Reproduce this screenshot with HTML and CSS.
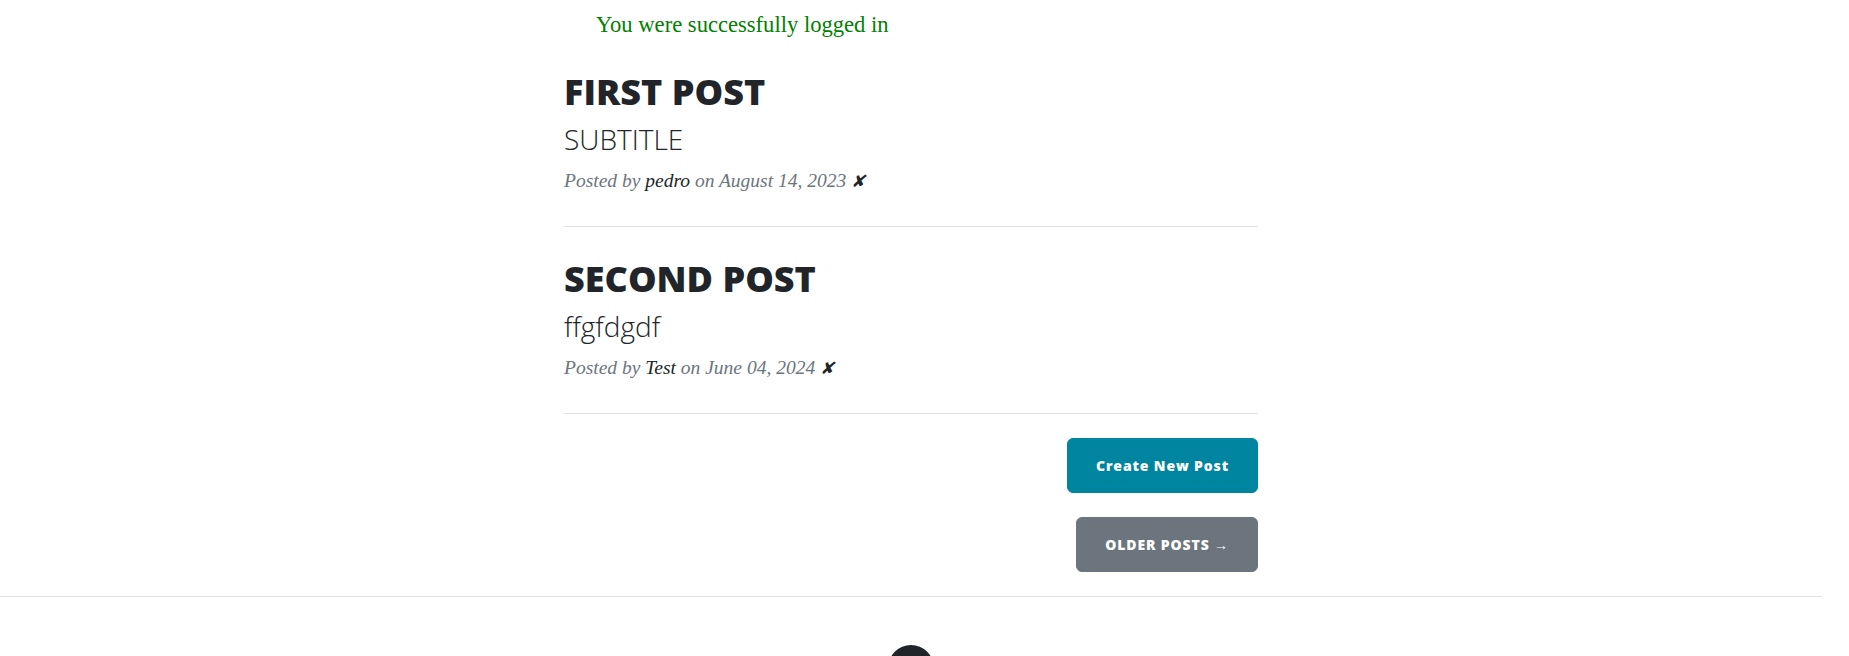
FILE: index.html
```html
<!DOCTYPE html>
<html lang="en">
<head>
<meta charset="utf-8">
<title>Clean Blog</title>
<link rel="stylesheet" href="styles.css">
</head>
<body>
<div class="page">
  <main class="container">
    <ul class="flashes">
      <li>You were successfully logged in</li>
    </ul>

    <div class="post-preview">
      <a class="post-link" href="#">
        <h2 class="post-title">First Post</h2>
        <h3 class="post-subtitle">SUBTITLE</h3>
      </a>
      <p class="post-meta">Posted by <a class="meta-link" href="#">pedro</a> on August 14, 2023 <a class="meta-link delete" href="#">✘</a></p>
    </div>
    <hr class="divider">

    <div class="post-preview">
      <a class="post-link" href="#">
        <h2 class="post-title">Second Post</h2>
        <h3 class="post-subtitle">ffgfdgdf</h3>
      </a>
      <p class="post-meta">Posted by <a class="meta-link" href="#">Test</a> on June 04, 2024 <a class="meta-link delete" href="#">✘</a></p>
    </div>
    <hr class="divider">

    <div class="actions">
      <a class="btn btn-primary" href="#">Create New Post</a>
    </div>
    <div class="actions">
      <a class="btn btn-secondary btn-upper" href="#">Older Posts →</a>
    </div>
  </main>

  <footer class="footer">
    <ul class="social">
      <li><span class="social-circle"></span></li>
    </ul>
  </footer>
</div>
</body>
</html>
```

FILE: styles.css
```css
html, body {
  margin: 0;
  padding: 0;
  background: #ffffff;
}

body {
  font-family: "Liberation Serif", "DejaVu Serif", serif;
  color: #212529;
  font-size: 20px;
}

.page {
  padding-right: 27px;
}

.container {
  width: 694px;
  margin: 0 auto;
}

.flashes {
  list-style: none;
  margin: 0;
  padding: 10px 0 0 32px;
}

.flashes li {
  color: #008000;
  font-size: 22.6px;
  line-height: 30px;
}

.post-link {
  color: #212529;
  text-decoration: none;
  display: block;
}

.post-title {
  font-family: "Open Sans", "Liberation Sans", sans-serif;
  font-weight: 800;
  font-size: 36px;
  line-height: 1.2;
  text-transform: uppercase;
  margin: 30px 0 10px;
  color: #212529;
}

.post-subtitle {
  font-family: "Open Sans", "Liberation Sans", sans-serif;
  font-weight: 300;
  font-size: 28px;
  line-height: 1.2;
  margin: 0 0 10px;
  color: #212529;
}

.post-meta {
  font-style: italic;
  font-size: 19.5px;
  line-height: 27px;
  height: 27px;
  color: #6c757d;
  margin: 0 0 32px;
}

.meta-link {
  color: #212529;
  text-decoration: none;
}

.delete {
  font-size: 17px;
  line-height: 1;
}

.divider {
  border: 0;
  border-top: 1px solid #dee2e6;
  margin: 0;
  height: 0;
}

.actions {
  display: flex;
  justify-content: flex-end;
  margin-top: 24px;
}

.btn {
  display: inline-block;
  font-family: "Open Sans", "Liberation Sans", sans-serif;
  font-weight: 800;
  font-size: 14px;
  line-height: 21px;
  letter-spacing: 0.0625em;
  color: #ffffff;
  text-decoration: none;
  padding: 16px 28px;
  border: 1px solid transparent;
  border-radius: 6px;
}

.btn-primary {
  background: #0085a1;
  border-color: #0085a1;
}

.btn-secondary {
  background: #6c757d;
  border-color: #6c757d;
}

.btn-upper {
  text-transform: uppercase;
}

.footer {
  margin-top: 24px;
  border-top: 1px solid #dee2e6;
  padding: 48px 0;
}

.social {
  list-style: none;
  margin: 0;
  padding: 0;
  display: flex;
  justify-content: center;
}

.social-circle {
  display: block;
  width: 46px;
  height: 46px;
  border-radius: 50%;
  background: #212529;
}
```
